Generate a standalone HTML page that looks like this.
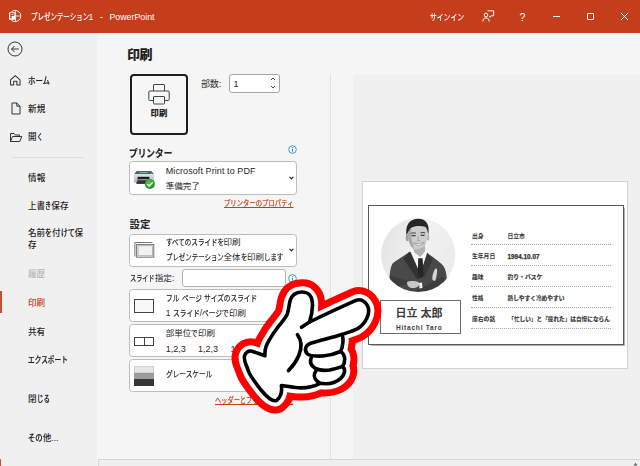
<!DOCTYPE html>
<html lang="ja">
<head>
<meta charset="utf-8">
<title>プレゼンテーション1 - PowerPoint</title>
<style>
html,body{margin:0;padding:0;}
body{width:640px;height:466px;overflow:hidden;position:relative;background:#f5f5f5;
  font-family:"Liberation Sans","Noto Sans CJK JP",sans-serif;color:#262626;font-size:9px;line-height:1;}
.abs{position:absolute;white-space:nowrap;}
#titlebar{position:absolute;left:0;top:0;width:640px;height:32.6px;background:#c43e1c;color:#fff;}
#sidebar{position:absolute;left:0;top:33px;width:97px;height:433px;background:#f0f0f0;}
.nav{position:absolute;left:28px;font-size:8.6px;color:#1f1f1f;font-weight:500;white-space:nowrap;transform:translateY(-50%);}
.t{position:absolute;white-space:nowrap;transform:translateY(-50%);}
.dd{position:absolute;left:129.3px;width:165.7px;background:#fff;border:1px solid #bcbcbc;border-radius:3.5px;box-sizing:content-box;}
.link{color:#c43e1c;text-decoration:underline;}
.link .k{text-decoration:underline;}
svg{position:absolute;overflow:visible;}
.k{-webkit-text-stroke:0.2px currentColor;display:inline-block;transform:scaleX(var(--s,.8));transform-origin:0 50%;margin-right:calc((var(--s,.8) - 1) * var(--n) * 1em);}
</style>
</head>
<body>

<!-- ===== title bar ===== -->
<div id="titlebar">
  <svg style="left:7.7px;top:9.3px" width="14" height="14" viewBox="0 0 14 14">
    <circle cx="7.2" cy="7" r="5.6" fill="none" stroke="#fff" stroke-width="0.9"/>
    <path d="M7.6 1.6V12.4M7.6 7H12.8" stroke="#fff" stroke-width="0.8" fill="none"/>
    <rect x="1" y="3.2" width="6.3" height="7.6" rx="0.6" fill="#fff"/>
    <text x="4.2" y="9.4" font-size="6.8" font-weight="700" text-anchor="middle" fill="#c43e1c" stroke="#c43e1c" stroke-width="0.35" font-family="Liberation Sans, sans-serif">P</text>
  </svg>
  <div class="t" style="left:30.5px;top:16.5px;font-size:8.8px;--s:0.736;"><span class="k" style="--n:9">プレゼンテーション</span>1</div>
  <div class="t" style="left:100px;top:16.5px;font-size:8.8px;">-</div>
  <div class="t" style="left:109.4px;top:16.5px;font-size:8.8px;letter-spacing:0.02px;">PowerPoint</div>
  <div class="t" style="left:430px;top:16.5px;font-size:8.5px;--s:0.800;"><span class="k" style="--n:5">サインイン</span></div>
  <svg style="left:482px;top:10px" width="13" height="13" viewBox="0 0 13 13" fill="none" stroke="#fff" stroke-width="1">
    <circle cx="4" cy="5" r="1.8"/>
    <path d="M0.8 11.5c0-2.2 1.4-3.6 3.2-3.6s3.2 1.4 3.2 3.6"/>
    <path d="M5.5 0.8h6.2v5h-2.2l-1.6 1.6v-1.6"/>
  </svg>
  <div class="t" style="left:519.5px;top:16.5px;font-size:10.5px;">?</div>
  <div class="abs" style="left:553px;top:16px;width:7px;height:1px;background:#fff;"></div>
  <div class="abs" style="left:587px;top:13px;width:5px;height:5px;border:1px solid #fff;border-radius:1px;"></div>
  <svg style="left:621px;top:13px" width="7" height="7" viewBox="0 0 7 7" stroke="#fff" stroke-width="1"><path d="M0 0L7 7M7 0L0 7"/></svg>
</div>

<!-- ===== sidebar ===== -->
<div id="sidebar"></div>
<svg style="left:7.4px;top:41.3px" width="16" height="16" viewBox="0 0 16 16" fill="none" stroke="#333" stroke-width="1">
  <circle cx="8" cy="8" r="7"/>
  <path d="M11.8 8H4.5M7.5 5L4.5 8L7.5 11"/>
</svg>
<!-- home -->
<svg style="left:9.3px;top:74px" width="12.6" height="12.6" viewBox="0 0 12 12" fill="none" stroke="#333" stroke-width="1" stroke-linejoin="round">
  <path d="M1.5 5.5L6 1.5L10.5 5.5V10.5H7.5V7H4.5V10.5H1.5Z"/>
</svg>
<div class="nav" style="top:80.5px;--s:0.863;"><span class="k" style="--n:3">ホーム</span></div>
<!-- new -->
<svg style="left:10.5px;top:102px" width="10" height="13" viewBox="0 0 10 13" fill="none" stroke="#333" stroke-width="1" stroke-linejoin="round">
  <path d="M1 1H5.8L9 4.2V12H1Z"/><path d="M5.8 1V4.2H9"/>
</svg>
<div class="nav" style="top:108.5px;letter-spacing:0.15px;">新規</div>
<!-- open -->
<svg style="left:9px;top:131.7px" width="14" height="11" viewBox="0 0 14 11" fill="none" stroke="#333" stroke-width="1" stroke-linejoin="round">
  <path d="M1.5 9.5V1.5H5L6.2 3H10.5V4.5"/><path d="M1.5 9.5L3.5 4.5H12.8L10.8 9.5Z"/>
</svg>
<div class="nav" style="top:137px;--s:0.684;">開<span class="k" style="--n:1">く</span></div>
<div class="abs" style="left:12px;top:157px;width:71px;height:1px;background:#dcdcdc;"></div>
<div class="nav" style="top:177.5px;letter-spacing:0.15px;">情報</div>
<div class="nav" style="top:206px;--s:0.707;">上書<span class="k" style="--n:1">き</span>保存</div>
<div class="nav" style="top:239.4px;white-space:normal;width:56px;line-height:11.5px;">名前<span class="k" style="--n:1">を</span>付<span class="k" style="--n:2">けて</span>保存</div>
<div class="nav" style="top:273.8px;color:#b4b4b4;letter-spacing:-0.10px;">履歴</div>
<div class="abs" style="left:0;top:291px;width:2px;height:22px;background:#c9502f;"></div>
<div class="nav" style="top:303px;color:#c43e1c;letter-spacing:-0.10px;">印刷</div>
<div class="nav" style="top:331.5px;letter-spacing:-0.10px;">共有</div>
<div class="nav" style="top:359.5px;--s:0.777;"><span class="k" style="--n:6">エクスポート</span></div>
<div class="nav" style="top:399px;--s:0.749;">閉<span class="k" style="--n:2">じる</span></div>
<div class="nav" style="top:437.5px;--s:0.856;"><span class="k" style="--n:2">その</span>他...</div>
<div class="abs" style="left:0;top:459px;width:1px;height:7px;background:#d9532c;"></div>

<!-- ===== bottom strip ===== -->
<div class="abs" style="left:98px;top:459px;width:542px;height:7px;background:#efefef;border-top:1px solid #d6d6d6;border-left:1px solid #d6d6d6;box-sizing:border-box;"></div>

<svg style="left:633px;top:462px" width="5" height="4" viewBox="0 0 5 4"><path d="M0.5 3.5L2.5 0.8L4.5 3.5Z" fill="#606060"/></svg>
<!-- ===== print column ===== -->
<div class="t" style="left:127px;top:53.7px;font-size:13px;font-weight:900;color:#222;letter-spacing:-0.51px;">印刷</div>

<div class="abs" style="left:129.8px;top:74.2px;width:54.5px;height:56.5px;border:2px solid #1e1e1e;border-radius:4px;background:#f7f7f7;"></div>
<svg style="left:148.4px;top:82.5px" width="22" height="22" viewBox="0 0 22 22" fill="#f7f7f7" stroke="#444" stroke-width="1" stroke-linejoin="round">
  <rect x="5.5" y="1.5" width="11" height="7" rx="0.5"/>
  <rect x="0.8" y="8" width="20.4" height="9.5" rx="1"/>
  <rect x="5.5" y="13.5" width="11" height="7.5" rx="0.5"/>
</svg>
<div class="t" style="left:150.4px;top:113px;font-size:8.3px;font-weight:900;color:#222;letter-spacing:0.21px;">印刷</div>

<div class="t" style="left:201px;top:84px;font-size:9px;letter-spacing:-0.17px;">部数:</div>
<div class="abs" style="left:229px;top:74px;width:49px;height:16.5px;border:1px solid #a6a6a6;border-radius:3px;background:#fff;"></div>
<div class="t" style="left:233.5px;top:84px;font-size:9px;">1</div>
<svg style="left:270px;top:76px" width="6" height="14" viewBox="0 0 6 14" fill="none" stroke="#333" stroke-width="0.9"><path d="M1 4L3 2L5 4M1 10L3 12L5 10"/></svg>

<div class="t" style="left:129.4px;top:152.5px;font-size:10.5px;font-weight:700;--s:0.825;"><span class="k" style="--n:5">プリンター</span></div>
<svg style="left:288px;top:144.8px" width="9" height="9" viewBox="0 0 9 9"><circle cx="4.5" cy="4.5" r="3.8" fill="#fff" stroke="#2b88d8" stroke-width="0.9"/><path d="M4.5 3.9V6.7M4.5 2.2V3.1" stroke="#2b88d8" stroke-width="1"/></svg>

<div class="dd" style="top:161.3px;height:31.4px;"></div>
<!-- printer icon -->
<svg style="left:133px;top:169px" width="24" height="22" viewBox="0 0 24 22">
  <defs>
    <linearGradient id="pb" x1="0" y1="0" x2="0" y2="1"><stop offset="0" stop-color="#dfe4e8"/><stop offset="1" stop-color="#aeb6be"/></linearGradient>
    <radialGradient id="gc" cx="0.4" cy="0.35" r="0.7"><stop offset="0" stop-color="#4fc24a"/><stop offset="1" stop-color="#1f8a22"/></radialGradient>
  </defs>
  <path d="M3.6 1.9H18.4L21 5.2H1Z" fill="#5a6166"/>
  <rect x="6.3" y="3" width="8.4" height="1" fill="#3fc8be"/>
  <circle cx="18.6" cy="4.2" r="0.5" fill="#5fe05a"/>
  <rect x="1" y="5" width="20" height="8.6" fill="url(#pb)"/>
  <rect x="4.6" y="7.8" width="11.8" height="5" fill="#1c1c1c"/>
  <rect x="5.2" y="10.3" width="10.6" height="1" fill="#c9c9c9"/>
  <rect x="3.4" y="12.6" width="9" height="2.3" fill="#2e2e2e"/>
  <circle cx="16.9" cy="15" r="5" fill="url(#gc)"/>
  <path d="M14.3 15.1L16.2 17L19.6 13.2" fill="none" stroke="#fff" stroke-width="1.3"/>
</svg>
<div class="t" style="left:165.8px;top:170.5px;font-size:9px;letter-spacing:0.08px;">Microsoft Print to PDF</div>
<div class="t" style="left:165.8px;top:185.5px;font-size:8.5px;letter-spacing:-0.03px;">準備完了</div>
<svg style="left:288.9px;top:176.4px" width="5" height="4" viewBox="0 0 5 4" fill="none" stroke="#222" stroke-width="1.05"><path d="M0.5 0.8L2.5 2.9L4.5 0.8"/></svg>

<div class="t link" style="left:224px;top:204px;font-size:8px;--s:0.794;"><span class="k" style="--n:11">プリンターのプロパティ</span></div>

<div class="t" style="left:129.5px;top:225px;font-size:10.4px;font-weight:700;letter-spacing:0.16px;">設定</div>

<div class="dd" style="top:233.7px;height:31.3px;"></div>
<svg style="left:134px;top:241px" width="21" height="18" viewBox="0 0 21 18" fill="none" stroke="#6a6a6a" stroke-width="0.9">
  <path d="M0.9 15.5V1.5H18.4"/>
  <rect x="2.6" y="3.4" width="17.2" height="12.8" fill="#f2f2f2"/>
  <rect x="4" y="4.8" width="14.4" height="10" stroke="#9a9a9a" stroke-width="0.7"/>
</svg>
<div class="t" style="left:165.8px;top:242px;font-size:8.5px;--s:0.767;"><span class="k" style="--n:9">すべてのスライドを</span>印刷</div>
<div class="t" style="left:165.8px;top:257.3px;font-size:8.5px;--s:0.757;"><span class="k" style="--n:9">プレゼンテーション</span>全体<span class="k" style="--n:1">を</span>印刷<span class="k" style="--n:3">します</span></div>
<svg style="left:288.9px;top:247.9px" width="5" height="4" viewBox="0 0 5 4" fill="none" stroke="#222" stroke-width="1.05"><path d="M0.5 0.8L2.5 2.9L4.5 0.8"/></svg>

<div class="t" style="left:130px;top:278px;font-size:8.5px;--s:0.724;"><span class="k" style="--n:4">スライド</span>指定:</div>
<div class="abs" style="left:182px;top:269px;width:102px;height:16px;border:1px solid #b4b4b4;border-radius:3px;background:#fff;"></div>
<svg style="left:287.6px;top:273.5px" width="9" height="9" viewBox="0 0 9 9"><circle cx="4.5" cy="4.5" r="3.8" fill="#fff" stroke="#2b88d8" stroke-width="0.9"/><path d="M4.5 3.9V6.7M4.5 2.2V3.1" stroke="#2b88d8" stroke-width="1"/></svg>

<div class="dd" style="top:289.1px;height:31px;"></div>
<div class="abs" style="left:134px;top:299px;width:20px;height:14px;border:1px solid #444;background:#f8f8f8;box-sizing:border-box;"></div>
<div class="t" style="left:165.8px;top:297.9px;font-size:8.5px;--s:0.785;"><span class="k" style="--n:2">フル</span> <span class="k" style="--n:3">ページ</span> <span class="k" style="--n:8">サイズのスライド</span></div>
<div class="t" style="left:165.8px;top:313px;font-size:8.5px;--s:0.792;">1 <span class="k" style="--n:4">スライド</span>/<span class="k" style="--n:4">ページで</span>印刷</div>

<div class="dd" style="top:324.1px;height:31px;"></div>
<div class="abs" style="left:134px;top:336.8px;width:10.5px;height:8.8px;border:1px solid #444;background:#fff;box-sizing:border-box;"></div>
<div class="abs" style="left:143.5px;top:336.8px;width:10.5px;height:8.8px;border:1px solid #444;background:#fff;box-sizing:border-box;"></div>
<div class="t" style="left:165.8px;top:333.2px;font-size:8.5px;--s:0.783;">部単位<span class="k" style="--n:1">で</span>印刷</div>
<div class="t" style="left:165.8px;top:348.5px;font-size:9px;">1,2,3</div><div class="t" style="left:198px;top:348.5px;font-size:9px;">1,2,3</div><div class="t" style="left:230.4px;top:348.5px;font-size:9px;">1,2,3</div>

<div class="dd" style="top:359.2px;height:31px;"></div>
<div class="abs" style="left:134px;top:366.3px;width:20px;height:6.5px;background:#e6e6e6;box-shadow:inset 0 0 0 0.6px #c4c4c4;"></div>
<div class="abs" style="left:134px;top:372.8px;width:20px;height:6.4px;background:#9c9c9c;"></div>
<div class="abs" style="left:134px;top:379.2px;width:20px;height:7px;background:#363636;"></div>
<div class="t" style="left:165.8px;top:374.2px;font-size:8.5px;--s:0.784;"><span class="k" style="--n:7">グレースケール</span></div>

<div class="t link" style="left:215px;top:401px;font-size:8px;--s:0.777;"><span class="k" style="--n:10">ヘッダーとフッターの</span>編集</div>

<!-- ===== divider + preview ===== -->
<div class="abs" style="left:329.6px;top:74px;width:1.4px;height:385px;background:#e2e2e2;"></div>
<div class="abs" style="left:353px;top:75px;width:287px;height:384px;background:#f0f0f0;"></div>

<div class="abs" style="left:362.3px;top:181px;width:265.9px;height:188px;background:#fff;border:1px solid #d2d2d2;box-sizing:border-box;"></div>
<div class="abs" style="left:368px;top:205px;width:256px;height:140px;background:#fff;border:1px solid #5a5a5a;box-sizing:border-box;box-shadow:0.6px 0.8px 0.8px rgba(0,0,0,.3);"></div>

<!-- portrait -->
<svg style="left:381px;top:218px" width="74" height="74" viewBox="0 0 74 74">
  <defs>
    <clipPath id="cc"><circle cx="37.2" cy="37" r="37.1"/></clipPath>
    <filter id="bl" x="-10%" y="-10%" width="120%" height="120%"><feGaussianBlur stdDeviation="0.55"/></filter>
    <linearGradient id="bgk" x1="0" y1="0" x2="1" y2="0.3"><stop offset="0" stop-color="#e2e2e2"/><stop offset="0.6" stop-color="#f2f2f2"/><stop offset="1" stop-color="#ececec"/></linearGradient>
  </defs>
  <circle cx="37.2" cy="37" r="37.1" fill="url(#bgk)"/>
  <g clip-path="url(#cc)">
  <g filter="url(#bl)">
    <!-- suit body -->
    <path d="M8 80C8 62 8.5 49 12 45C17 41 23 38 28.5 34L46 35C51 38.5 58 43 62 47.5C65.5 52 66.5 60 66.5 80Z" fill="#484848"/>
    <!-- shirt -->
    <path d="M28.8 32L39.3 56L46.8 33L40 30Z" fill="#f8f8f8"/>
    <!-- lapels -->
    <path d="M28.5 33.5L22.5 41L37.5 63L38.8 55Z" fill="#333"/>
    <path d="M46.5 34.5L51.5 42L41.5 63L39.8 55Z" fill="#383838"/>
    <!-- tie -->
    <path d="M37.2 40.3H41.6L42.6 57L39.8 61.5L36.8 57Z" fill="#262626"/>
    <!-- neck -->
    <path d="M32 27H44V33.5L39.3 39L33.2 34.3Z" fill="#b2b2b2"/>
    <!-- ears -->
    <ellipse cx="26.3" cy="20" rx="1.6" ry="3.2" fill="#a0a0a0"/>
    <ellipse cx="47" cy="19.5" rx="1.4" ry="3" fill="#b8b8b8"/>
    <!-- face -->
    <path d="M26.8 14C26.8 8 31 5.5 36.5 5.5C42 5.5 46.4 8 46.4 14C46.4 19 46 24 44 27.8C42 31.2 39.5 32.8 37.2 32.8C34.5 32.8 31.5 30.8 29.5 27.6C27.3 24 26.8 18 26.8 14Z" fill="#cdcdcd"/>
    <!-- face shading left -->
    <path d="M26.8 14C26.8 18 27.3 24 29.5 27.6C30.6 29.3 32 30.8 33.4 31.6C31 26 29.8 18 30.2 10.5C28 11.5 26.8 12.5 26.8 14Z" fill="#a8a8a8"/>
    <path d="M33.4 31.6C35 32.6 36.4 32.8 37.2 32.8C39.5 32.8 42 31.2 44 27.8C41.5 30 37 31.6 33.4 31.6Z" fill="#b0b0b0"/>
    <!-- hair -->
    <path d="M25.6 18C23.8 8 28 1.2 36.5 0.8C45.2 0.5 49.2 6.5 47.2 17.5C46.8 13.5 46.2 10.5 44.2 8.8C40 7.4 33.5 7.6 30.2 9.8C28.2 11.5 26.6 14.5 25.6 18Z" fill="#282828"/>
    <!-- brows / eyes -->
    <path d="M30 15.4Q32.4 14.2 34.8 15.2M39.4 15Q41.8 13.9 44.2 15" stroke="#3a3a3a" stroke-width="1" fill="none"/>
    <path d="M30.6 17.7h4M39.8 17.4h3.8" stroke="#3c3c3c" stroke-width="1.3"/>
    <!-- nose -->
    <path d="M37.4 18.2L36.6 22.6H39" stroke="#909090" stroke-width="0.7" fill="none"/>
    <!-- cheeks -->
    <path d="M32 24.2Q31.4 26 32.6 27.6M43 23.8Q43.6 25.6 42.6 27.2" stroke="#999" stroke-width="0.6" fill="none"/>
    <!-- smile -->
    <path d="M33.2 25Q38 26.4 42.4 24.6Q38.4 30.2 33.2 25Z" fill="#f8f8f8" stroke="#6a6a6a" stroke-width="0.5"/>
    <!-- crossed arms -->
    <path d="M9 58C18 60 30 64 40 68L62 58L67 80H8Z" fill="#3c3c3c"/>
    <path d="M12 70C22 66 40 62 56 52L62 58C48 68 30 74 14 78Z" fill="#4a4a4a"/>
    <!-- right hand (finger up) -->
    <path d="M51.5 62C51 58 52.5 53 54.5 50.5C56 50 56.5 52 56 55C55.6 58 55 61 54 63Z" fill="#d6d6d6"/>
    <!-- left hand -->
    <path d="M26 64C29 62.5 35 62.5 38 64.5C39 67 37 69.5 33 70C29 70.5 26 68.5 26 64Z" fill="#c8c8c8"/>
    <!-- cuff -->
    <path d="M38 65L41 64.5L41.5 70L38.5 70.5Z" fill="#f0f0f0"/>
  </g>
  </g>
</svg>

<!-- name box -->
<div class="abs" style="left:379.5px;top:300px;width:81px;height:33.5px;border:1px solid #6a6a6a;box-sizing:border-box;background:#fff;"></div>
<div class="t" style="left:419px;top:313.3px;font-size:11px;font-weight:700;color:#3a3a3a;transform:translate(-50%,-50%);">日立 太郎</div>
<div class="t" style="left:419.3px;top:328px;font-size:6.6px;font-weight:700;color:#3a3a3a;letter-spacing:0.75px;transform:translate(-50%,-50%);">Hitachi Taro</div>

<!-- rows -->
<div id="rows" style="font-size:5.8px;font-weight:700;color:#333;--s:1;">
<div class="t" style="left:472px;top:236.8px;">出身</div><div class="t" style="left:507.5px;top:236.8px;">日立市</div>
<div class="t" style="left:472px;top:257.3px;">生年月日</div><div class="t" style="left:507.5px;top:257.3px;font-size:6.4px;-webkit-text-stroke:0.25px #333;">1994.10.07</div>
<div class="t" style="left:472px;top:278.0px;">趣味</div><div class="t" style="left:507.5px;top:278.0px;">釣<span class="k" style="--n:5">り・バスケ</span></div>
<div class="t" style="left:472px;top:298.9px;">性格</div><div class="t" style="left:507.5px;top:298.9px;font-size:5.7px;">熱<span class="k" style="--n:4">しやすく</span>冷<span class="k" style="--n:4">めやすい</span></div>
<div class="t" style="left:472px;top:319.5px;">座右<span class="k" style="--n:1">の</span>銘</div><div class="t" style="left:508.3px;top:319.5px;font-size:5.65px;">「忙<span class="k" style="--n:2">しい</span>」<span class="k" style="--n:1">と</span>「疲<span class="k" style="--n:2">れた</span>」<span class="k" style="--n:1">は</span>自慢<span class="k" style="--n:4">にならん</span></div>
</div>
<div class="abs" style="left:470.5px;top:244px;width:140px;border-top:1px dotted #a8a8a8;"></div>
<div class="abs" style="left:470.5px;top:265px;width:140px;border-top:1px dotted #a8a8a8;"></div>
<div class="abs" style="left:470.5px;top:286px;width:140px;border-top:1px dotted #a8a8a8;"></div>
<div class="abs" style="left:470.5px;top:306.5px;width:140px;border-top:1px dotted #a8a8a8;"></div>
<div class="abs" style="left:470.5px;top:327.5px;width:140px;border-top:1px dotted #a8a8a8;"></div>

<!-- ===== pointing hand ===== -->
<svg id="hand" style="left:0;top:0" width="640" height="466" viewBox="0 0 640 466" stroke-linejoin="round" stroke-linecap="round">
  <defs>
    <path id="sil" d="M301.5 292C307 291.5 311.5 295 312.3 302C313 309 311.5 316 309.5 322C325 314.5 341 307 356 300.4C361 298.5 366 301.5 368.2 307.5C370 314 366 323.5 357.7 328.6C352 331.5 346 333 342 334.5C343.5 338 343.5 346 340.5 351.5C344.5 353.5 346.5 360 342.5 366.5C345.5 369 345.5 374 340.5 378.6C336 382.5 328 384.5 320 383.3C314 386.5 304 388.5 295.5 387.5C290 387 285 386 281.4 385.5C282 390 282 396 276.7 400.3C273 402 268 398.5 261 390C255 382 250 376 248.5 371.3C247 366 243 360 244.6 355.7C246 352 249 350.5 252 351.2L265 355.7C264.5 350 266 345 269 340.5C272 335 274 332 277 328.3C282 322 285.5 318 287.2 314.2C289 309 289 304 290.3 300.1C292 295 296 292.3 301.5 292Z"/>
  </defs>
  <use href="#sil" fill="#f00" stroke="#f00" stroke-width="25.5"/>
  <use href="#sil" fill="#fff" stroke="#fff" stroke-width="11.5"/>
  <use href="#sil" fill="#fff" stroke="#000" stroke-width="3.6"/>
  <g fill="none" stroke="#000" stroke-width="3.6">
    <path d="M309.5 322L301.5 327.3"/>
    <path d="M297.4 334.7C301.5 340 302 348 298.7 355.7C296 362 292 367 288.5 370.6"/>
    <path d="M342 334.5C332 337.5 320 340.5 310.7 343.3C305.5 345 304 350 307 353.5C309 356 314 356.5 323 356C330 355.5 336 353.5 340.5 351.5"/>
    <path d="M311.5 357C309.5 361 310 365 315.4 368.4C320 370.8 326 370.5 329.5 370C335 369 339 367.5 342.5 366.5"/>
    <path d="M316 370.8C313.5 374 314 378 316.5 380.5C318 382 319 382.8 320 383.3"/>
  </g>
</svg>

</body>
</html>
